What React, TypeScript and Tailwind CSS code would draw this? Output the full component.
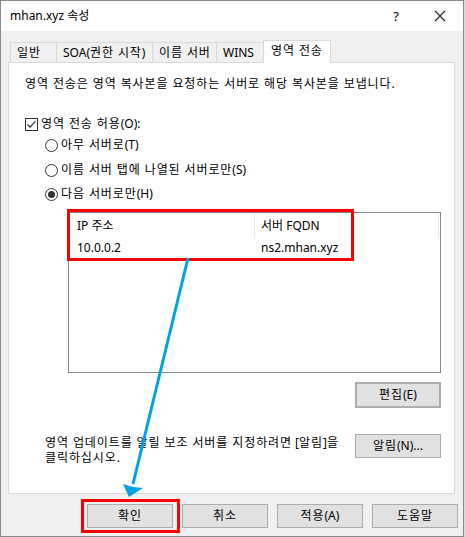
import React from "react";

const FONT = { fontFamily: "'Noto Sans','Noto Sans CJK KR',sans-serif" };

function K({ t }: { t: string }) {
  const parts = t.split(/([가-힣]+(?: [가-힣]+)*)/);
  return (
    <>
      {parts.map((p, i) =>
        /[가-힣]/.test(p) ? (
          <span key={i} className="tracking-[0.9px]">
            {p}
          </span>
        ) : (
          <span key={i}>{p}</span>
        )
      )}
    </>
  );
}

function Btn({ children, className = "" }: { children: React.ReactNode; className?: string }) {
  return (
    <div
      className={`flex items-center justify-center bg-[#e1e1e1] border border-[#adadad] text-[12px] leading-[16px] text-black ${className}`}
    >
      {children}
    </div>
  );
}

function Radio({ checked, label }: { checked?: boolean; label: string }) {
  return (
    <div className="flex items-center h-[16px] ml-[20px]">
      <div className="w-[13px] h-[13px] rounded-full border border-[#333] bg-white flex items-center justify-center">
        {checked && <div className="w-[7px] h-[7px] rounded-full bg-[#333]" />}
      </div>
      <span className="ml-[3px] text-[12px] leading-[16px] whitespace-nowrap">
        <K t={label} />
      </span>
    </div>
  );
}

export default function App() {
  const tabs = [
    { t: "일반", w: "w-[47px]" },
    { t: "SOA(권한 시작)", w: "w-[96px]" },
    { t: "이름 서버", w: "w-[64px]" },
    { t: "WINS", w: "w-[47px]" },
  ];
  return (
    <div className="relative w-[465px] h-[537px] overflow-hidden bg-[#dcdcdc]" style={FONT}>
      <div className="w-[464px] h-[537px] flex flex-col bg-[#f0f0f0] border border-[#8a8a8a] text-black">
        {/* Title bar */}
        <div className="h-[30px] bg-white flex items-center shrink-0">
          <span className="ml-[9px] text-[12px] leading-[16px]">mhan.xyz 속성</span>
          <span className="ml-auto text-[13px] leading-[16px] mr-[35px]">?</span>
          <svg width="12" height="12" viewBox="0 0 12 12" className="mr-[17px]">
            <path d="M1 1 L11 11 M11 1 L1 11" stroke="#222" strokeWidth="1.1" />
          </svg>
        </div>
        {/* Tabs */}
        <div className="flex items-end h-[31px] pl-[9px] shrink-0">
          {tabs.map((tb, i) => (
            <div
              key={i}
              className={`${tb.w} h-[20px] border border-[#d9d9d9] border-b-0 ${i > 0 ? "border-l-0" : ""} flex items-center pl-[6px] text-[12px] leading-[16px] bg-[#f0f0f0] whitespace-nowrap`}
            >
              <K t={tb.t} />
            </div>
          ))}
          <div className="w-[68px] h-[23px] border border-[#d9d9d9] border-b-0 bg-white -ml-px flex items-start pt-[2px] pl-[7px] text-[12px] leading-[16px] relative top-[1px] z-10 whitespace-nowrap">
            <K t="영역 전송" />
          </div>
        </div>
        {/* Panel */}
        <div className="ml-[7px] w-[447px] h-[432px] bg-white border border-[#d9d9d9] flex flex-col pl-[16px] text-[12px] leading-[16px] shrink-0">
          <div className="mt-[13px] h-[16px] whitespace-nowrap">
            <K t="영역 전송은 영역 복사본을 요청하는 서버로 해당 복사본을 보냅니다." />
          </div>
          <div className="mt-[24px] flex items-center h-[16px]">
            <div className="w-[13px] h-[13px] border border-[#333] bg-white flex items-center justify-center">
              <svg width="11" height="11" viewBox="0 0 11 11">
                <path d="M1.5 5.5 L4.2 8.2 L9.5 2" fill="none" stroke="#222" strokeWidth="1.1" />
              </svg>
            </div>
            <span className="ml-[3px]">
              <K t="영역 전송 허용(O):" />
            </span>
          </div>
          <div className="mt-[5px]">
            <Radio label="아무 서버로(T)" />
          </div>
          <div className="mt-[9px]">
            <Radio label="이름 서버 탭에 나열된 서버로만(S)" />
          </div>
          <div className="mt-[8px]">
            <Radio checked label="다음 서버로만(H)" />
          </div>
          {/* List view */}
          <div className="mt-[10px] ml-[43px] w-[373px] h-[161px] border border-[#828790] bg-white flex flex-col">
            <div className="flex h-[25px] items-center">
              <div className="w-[185px] pl-[8px] h-full flex items-center">IP 주소</div>
              <div className="w-px h-[23px] bg-[#e5e5e5]" />
              <div className="w-[183px] pl-[6px] h-full flex items-center">서버 FQDN</div>
              <div className="w-px h-[23px] bg-[#e5e5e5]" />
            </div>
            <div className="flex h-[20px] items-center">
              <div className="w-[186px] pl-[8px]">10.0.0.2</div>
              <div className="pl-[6px]">ns2.mhan.xyz</div>
            </div>
          </div>
          <div className="mt-[9px] flex justify-end pr-[13px]">
            <Btn className="w-[86px] h-[26px] border-2 border-[#0078d7]">
              <K t="편집(E)" />
            </Btn>
          </div>
          <div className="mt-[26px] flex items-start pr-[13px]">
            <div className="ml-[20px] leading-[15px] mt-[1px] whitespace-nowrap">
              <K t="영역 업데이트를 알릴 보조 서버를 지정하려면 [알림]을" />
              <br />
              <K t="클릭하십시오." />
            </div>
            <Btn className="ml-auto w-[86px] h-[24px]">
              <K t="알림(N)..." />
            </Btn>
          </div>
        </div>
        {/* Bottom buttons */}
        <div className="flex mt-[10px] pl-[86px] gap-[9px]">
          <Btn className="w-[86px] h-[24px]">
            <K t="확인" />
          </Btn>
          <Btn className="w-[86px] h-[24px]">
            <K t="취소" />
          </Btn>
          <Btn className="w-[86px] h-[24px]">
            <K t="적용(A)" />
          </Btn>
          <Btn className="w-[86px] h-[24px]">
            <K t="도움말" />
          </Btn>
        </div>
      </div>

      {/* Highlight overlays */}
      <div className="absolute left-[67px] top-[209px] w-[287px] h-[52px] border-[3px] border-[#ff0000]" />
      <div className="absolute left-[81px] top-[499px] w-[99px] h-[34px] border-[3px] border-[#ff0000]" />
      <svg className="absolute left-0 top-0" width="465" height="537" viewBox="0 0 465 537">
        <line x1="188" y1="258" x2="133" y2="484" stroke="#00a2e8" strokeWidth="3" />
        <polygon points="129,497 123,484 133,487 143,488" fill="#00a2e8" />
      </svg>
    </div>
  );
}
